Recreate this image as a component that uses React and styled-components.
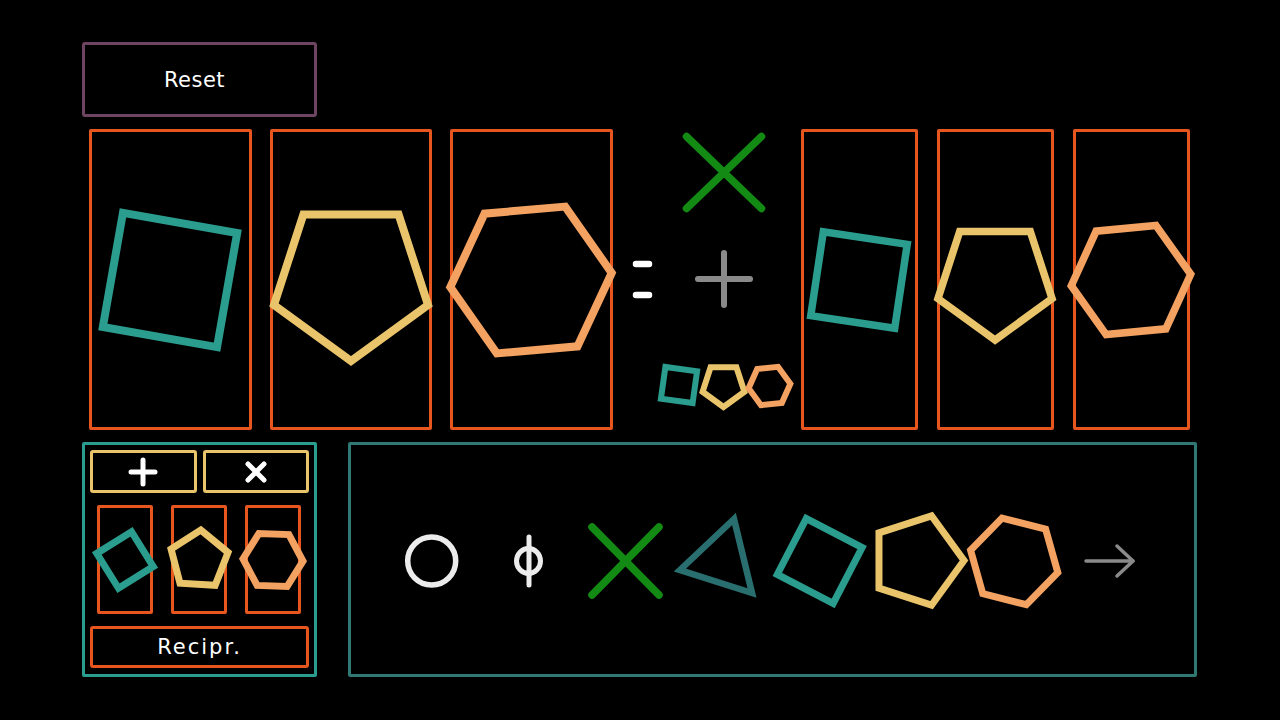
import React from "react";
import styled, { createGlobalStyle } from "styled-components";

const TEAL = "#2a9d8f";
const DARK_TEAL = "#2a6f70";
const YELLOW = "#e9c46a";
const ORANGE = "#f4a261";
const RED = "#e8561f";
const GREEN = "#138a13";
const GREY = "#8a8a8a";
const WHITE = "#ececec";

const GlobalStyle = createGlobalStyle`
  html, body {
    margin: 0;
    padding: 0;
    background: #000;
  }
  body {
    font-family: "DejaVu Sans", "Liberation Sans", sans-serif;
    color: #fff;
  }
`;

const Page = styled.div`
  width: 1280px;
  height: 720px;
  box-sizing: border-box;
  padding: 42px 0 0 82px;
  display: flex;
  flex-direction: column;
  gap: 12px;
  overflow: hidden;
`;

const TextButton = styled.button`
  box-sizing: border-box;
  width: ${(p) => p.$width || "100%"};
  height: ${(p) => p.$height}px;
  background: transparent;
  border: 3px solid ${(p) => p.$color};
  border-radius: 3px;
  color: #fff;
  font-family: inherit;
  font-size: 21px;
  letter-spacing: ${(p) => p.$spacing || "0.5px"};
  display: flex;
  align-items: center;
  justify-content: center;
  padding: 0 ${(p) => p.$shift || 0}px 0 0;
  cursor: pointer;
`;

const TopRow = styled.div`
  display: flex;
  height: 301px;
  margin-left: 7px;
`;

const CardGroup = styled.div`
  display: flex;
  gap: ${(p) => p.$gap}px;
`;

const Card = styled.div`
  box-sizing: border-box;
  width: ${(p) => p.$width}px;
  height: ${(p) => p.$height || 301}px;
  border: 3px solid ${RED};
  border-radius: 2px;
  display: flex;
  align-items: center;
  justify-content: center;
  overflow: visible;
`;

const Middle = styled.div`
  width: 188px;
  height: 301px;
  display: flex;
`;

const Drawing = styled.svg`
  overflow: visible;
  flex-shrink: 0;
  display: block;
`;

const BottomRow = styled.div`
  display: flex;
  gap: 31px;
  height: 235px;
`;

const Toolbox = styled.div`
  box-sizing: border-box;
  width: 235px;
  height: 235px;
  border: 3px solid ${TEAL};
  border-radius: 2px;
  padding: 5px 5px 6px;
  display: flex;
  flex-direction: column;
  gap: 12px;
`;

const OpRow = styled.div`
  display: grid;
  grid-template-columns: 1fr 1fr;
  gap: 6px;
`;

const SlotRow = styled.div`
  display: flex;
  gap: 18px;
  padding: 0 7px;
`;

const Sequence = styled.div`
  box-sizing: border-box;
  width: 849px;
  height: 235px;
  border: 3px solid #2f7874;
  border-radius: 2px;
  display: flex;
  align-items: center;
  padding-left: 49px;
`;

function polyPoints(cx, cy, r, n, startDeg) {
  const pts = [];
  for (let i = 0; i < n; i++) {
    const a = ((startDeg + (360 / n) * i) * Math.PI) / 180;
    pts.push(`${(cx + r * Math.cos(a)).toFixed(2)},${(cy + r * Math.sin(a)).toFixed(2)}`);
  }
  return pts.join(" ");
}

const Poly = ({ cx = 0, cy = 0, r, n, start, color, width }) => (
  <polygon
    points={polyPoints(cx, cy, r, n, start)}
    fill="none"
    stroke={color}
    strokeWidth={width}
    strokeLinejoin="miter"
  />
);

const Shape = ({ size, ...rest }) => (
  <Drawing width={size} height={size} viewBox={`${-size / 2} ${-size / 2} ${size} ${size}`}>
    <Poly {...rest} />
  </Drawing>
);

const Line = ({ x1, y1, x2, y2, color, width }) => (
  <line x1={x1} y1={y1} x2={x2} y2={y2} stroke={color} strokeWidth={width} strokeLinecap="round" />
);

const bigShapes = [
  { n: 4, r: 82, start: 55, color: TEAL },
  { n: 5, r: 81, start: 90, color: YELLOW },
  { n: 6, r: 81, start: -5, color: ORANGE },
];

const narrowShapes = [
  { n: 4, r: 60, start: 53.5, color: TEAL },
  { n: 5, r: 60, start: 90, color: YELLOW },
  { n: 6, r: 60, start: -5.5, color: ORANGE },
];

const slotShapes = [
  { n: 4, r: 29, start: 13, color: TEAL },
  { n: 5, r: 30, start: -86.6, color: YELLOW },
  { n: 6, r: 30, start: 2, color: ORANGE },
];

const MiddleDrawing = () => (
  <Drawing width="188" height="301" viewBox="0 0 188 301">
    <Line x1={73.5} y1={7.5} x2={148.5} y2={79.5} color={GREEN} width={7.5} />
    <Line x1={148.5} y1={7.5} x2={73.5} y2={79.5} color={GREEN} width={7.5} />
    <Line x1={23} y1={135} x2={36} y2={135} color="#fff" width={6.5} />
    <Line x1={23} y1={166} x2={36} y2={166} color="#fff" width={6.5} />
    <Line x1={111} y1={124} x2={111} y2={176} color={GREY} width={6} />
    <Line x1={85} y1={150} x2={137} y2={150} color={GREY} width={6} />
    <Poly cx={66} cy={256} r={22.6} n={4} start={53} color={TEAL} width={6} />
    <Poly cx={110.5} cy={256} r={22} n={5} start={90} color={YELLOW} width={6} />
    <Poly cx={156.5} cy={257} r={21} n={6} start={-6} color={ORANGE} width={6} />
  </Drawing>
);

const PlusIcon = () => (
  <svg width="30" height="30" viewBox="0 0 30 30">
    <Line x1={15} y1={3} x2={15} y2={27} color="#fff" width={5} />
    <Line x1={3} y1={15} x2={27} y2={15} color="#fff" width={5} />
  </svg>
);

const TimesIcon = () => (
  <svg width="22" height="22" viewBox="0 0 22 22">
    <Line x1={3} y1={3} x2={19} y2={19} color="#fff" width={5} />
    <Line x1={19} y1={3} x2={3} y2={19} color="#fff" width={5} />
  </svg>
);

const SequenceDrawing = () => (
  <Drawing width="740" height="110" viewBox="0 0 740 110">
    <circle cx={31.7} cy={56} r={24} fill="none" stroke={WHITE} strokeWidth={5.5} />
    <Line x1={129} y1={32} x2={129} y2={80} color={WHITE} width={5} />
    <ellipse cx={128.5} cy={56} rx={12} ry={12.5} fill="none" stroke={WHITE} strokeWidth={5} />
    <Line x1={192} y1={22} x2={259} y2={90} color={GREEN} width={7.5} />
    <Line x1={259} y1={22} x2={192} y2={90} color={GREEN} width={7.5} />
    <polygon
      points="334,14 280,65 352,88"
      fill="none"
      stroke={DARK_TEAL}
      strokeWidth={6.5}
      strokeLinejoin="miter"
    />
    <Poly cx={419.7} cy={56} r={44.5} n={4} start={72.4} color={TEAL} width={7} />
    <Poly cx={517} cy={55.5} r={47} n={5} start={0} color={YELLOW} width={7} />
    <Poly cx={614.2} cy={56.4} r={45} n={6} start={-105.7} color={ORANGE} width={7} />
    <Line x1={686} y1={56} x2={733} y2={56} color={GREY} width={3.5} />
    <polyline
      points="717,41 733,56 717,71"
      fill="none"
      stroke={GREY}
      strokeWidth={3.5}
      strokeLinecap="round"
      strokeLinejoin="round"
    />
  </Drawing>
);

export default function App() {
  return (
    <>
      <GlobalStyle />
      <Page>
        <TextButton $width="235px" $height={75} $color="#6e4560" $shift={10}>
          Reset
        </TextButton>

        <TopRow>
          <CardGroup $gap={18}>
            {bigShapes.map((s, i) => (
              <Card key={i} $width={162.5}>
                <Shape size={180} width={8} {...s} />
              </Card>
            ))}
          </CardGroup>
          <Middle>
            <MiddleDrawing />
          </Middle>
          <CardGroup $gap={19}>
            {narrowShapes.map((s, i) => (
              <Card key={i} $width={117}>
                <Shape size={140} width={7.5} {...s} />
              </Card>
            ))}
          </CardGroup>
        </TopRow>

        <BottomRow>
          <Toolbox>
            <OpRow>
              <TextButton $height={43} $color={YELLOW}>
                <PlusIcon />
              </TextButton>
              <TextButton $height={43} $color={YELLOW}>
                <TimesIcon />
              </TextButton>
            </OpRow>
            <SlotRow>
              {slotShapes.map((s, i) => (
                <Card key={i} $width={56} $height={109}>
                  <Shape size={70} width={7} {...s} />
                </Card>
              ))}
            </SlotRow>
            <TextButton $height={42} $color={RED} $spacing="2px">
              Recipr.
            </TextButton>
          </Toolbox>

          <Sequence>
            <SequenceDrawing />
          </Sequence>
        </BottomRow>
      </Page>
    </>
  );
}
